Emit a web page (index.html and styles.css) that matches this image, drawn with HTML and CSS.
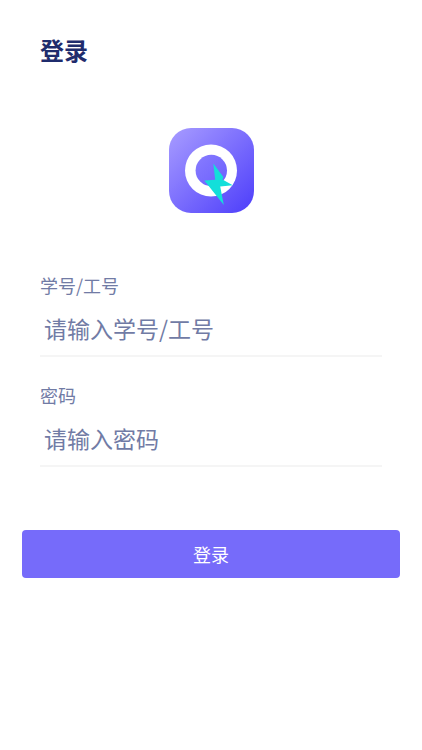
FILE: index.html
```html
<!DOCTYPE html>
<html lang="zh-CN">
<head>
<meta charset="utf-8">
<meta name="viewport" content="width=device-width, initial-scale=1">
<title>登录</title>
<link rel="stylesheet" href="styles.css">
</head>
<body>
<main class="login">
  <h1 class="title">登录</h1>
  <svg class="logo" viewBox="0 0 85 85" aria-hidden="true">
    <defs>
      <linearGradient id="tile" x1="0" y1="0" x2="1" y2="1">
        <stop offset="0.08" stop-color="#a195ff"/>
        <stop offset="0.92" stop-color="#5445fb"/>
      </linearGradient>
      <linearGradient id="hole" x1="0" y1="0" x2="1" y2="1">
        <stop offset="0" stop-color="#887cff"/>
        <stop offset="1" stop-color="#6b5ffd"/>
      </linearGradient>
    </defs>
    <rect width="85" height="85" rx="22" fill="url(#tile)"/>
    <circle cx="42" cy="42.5" r="26" fill="#fff"/>
    <circle cx="42.3" cy="42.5" r="15.7" fill="url(#hole)"/>
    <path d="M44.3 35.5 L54.4 49 L53.4 51.4 L63.8 57.3 L51.2 58.4 L54.8 77 L35.3 52.5 L46.2 51.8 Z" fill="#13dfda"/>
  </svg>
  <form class="form">
    <div class="field">
      <label class="label" for="account">学号/工号</label>
      <input class="input" id="account" type="text" placeholder="请输入学号/工号">
    </div>
    <div class="field">
      <label class="label" for="password">密码</label>
      <input class="input" id="password" type="password" placeholder="请输入密码">
    </div>
    <button class="submit" type="submit">登录</button>
  </form>
</main>
</body>
</html>
```
FILE: styles.css
```css
* {
  box-sizing: border-box;
}

body {
  margin: 0;
  background: #fff;
  color: #717ba5;
  font-family: "Noto Sans CJK SC", sans-serif;
  font-weight: 400;
}

.login {
  display: flex;
  flex-direction: column;
  padding: 32px 40px;
}

.title {
  margin: 0;
  color: #1f2c6d;
  font-size: 24px;
  font-weight: 700;
  line-height: 36px;
}

.logo {
  width: 85px;
  height: 85px;
  margin: 60px 0;
  align-self: center;
}

.form {
  display: flex;
  flex-direction: column;
}

.field {
  display: flex;
  flex-direction: column;
  height: 110px;
}

.label {
  font-size: 18px;
  line-height: 24px;
}

.input {
  width: 100%;
  height: 60px;
  padding: 8px 4px 4px;
  border: 0;
  border-bottom: 2px solid #f5f5f5;
  background: transparent;
  color: #1f2c6d;
  font: inherit;
  font-size: 23px;
  outline: none;
}

.input::placeholder {
  color: #717ba5;
  opacity: 1;
}

.submit {
  height: 48px;
  margin: 37px -18px 0;
  border: 0;
  border-radius: 4px;
  background: #766bfa;
  color: #fff;
  font: inherit;
  font-size: 18px;
}
```
